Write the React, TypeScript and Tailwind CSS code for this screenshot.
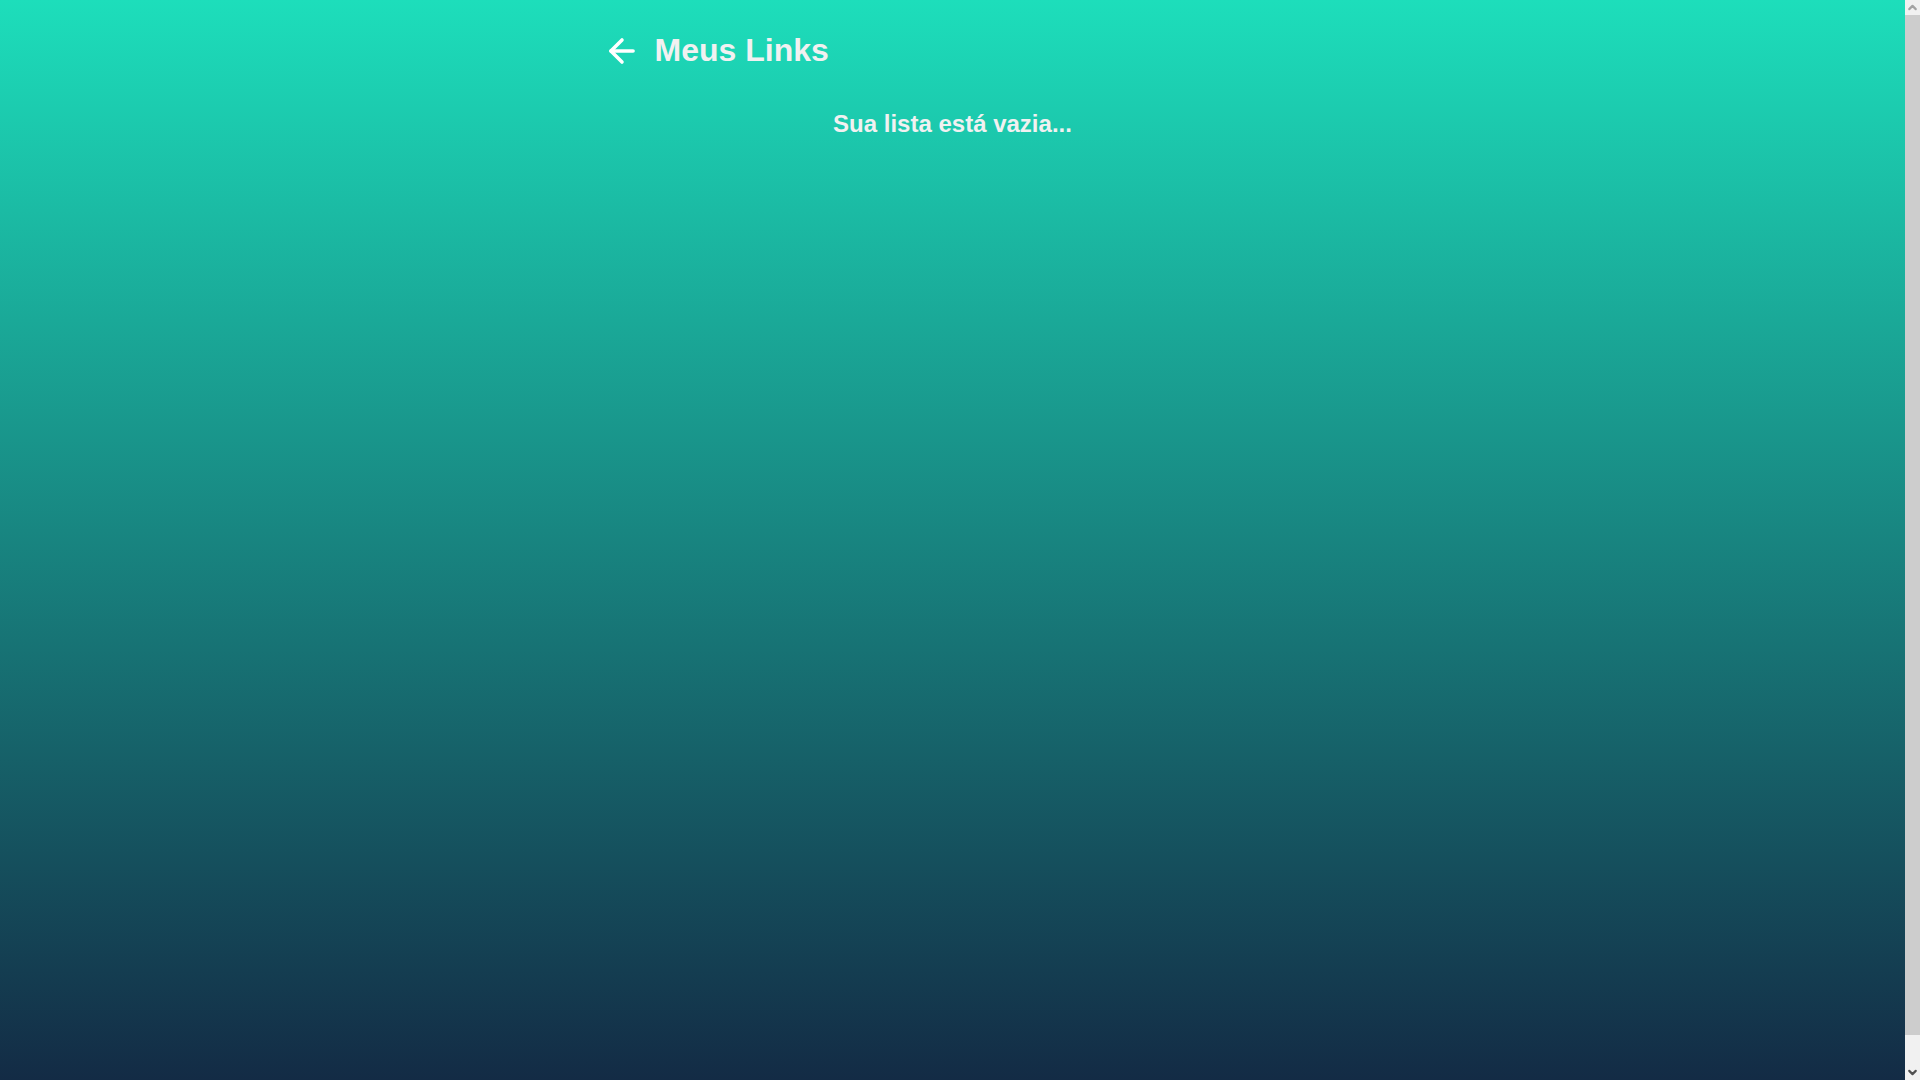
import { FiArrowLeft, FiChevronDown, FiChevronUp } from "react-icons/fi";

function Header() {
  return (
    <header className="flex items-start gap-[14px]">
      <a href="#inicio" aria-label="Voltar" className="text-white">
        <FiArrowLeft size={38} strokeWidth={2.25} />
      </a>
      <h1 className="text-[32px] leading-9 font-bold">Meus Links</h1>
    </header>
  );
}

function ScrollBar() {
  return (
    <div className="flex w-[15px] shrink-0 flex-col bg-[#f1f1f1]">
      <button
        type="button"
        aria-label="Rolar para cima"
        className="flex h-[15px] items-center justify-center text-[#a3a3a3]"
      >
        <FiChevronUp size={13} strokeWidth={4} />
      </button>
      <div className="flex flex-1 flex-col">
        <div className="basis-[97.1%] bg-[#cdcdcd]" />
      </div>
      <button
        type="button"
        aria-label="Rolar para baixo"
        className="flex h-[15px] items-center justify-center text-[#505050]"
      >
        <FiChevronDown size={13} strokeWidth={4} />
      </button>
    </div>
  );
}

export default function App() {
  return (
    <div className="flex min-h-screen bg-[linear-gradient(180deg,#1ddebb,#132b45)] font-['Liberation_Sans',Arial,sans-serif] text-[#f1f1f1]">
      <main className="min-w-0 flex-1">
        <div className="mx-auto w-full max-w-[700px] pt-8">
          <Header />
          <h2 className="mt-10 text-center text-2xl leading-7 font-bold">
            Sua lista está vazia...
          </h2>
        </div>
      </main>
      <ScrollBar />
    </div>
  );
}
